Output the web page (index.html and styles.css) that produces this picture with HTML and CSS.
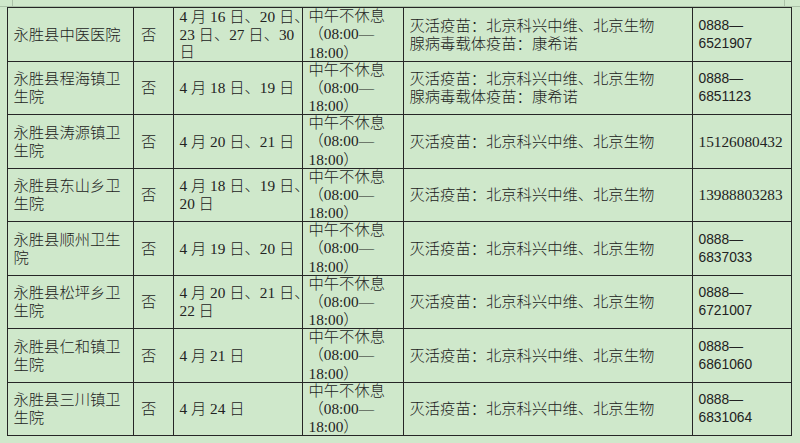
FILE: index.html
```html
<!DOCTYPE html>
<html lang="zh-CN">
<head>
<meta charset="utf-8">
<title>永胜县疫苗接种点</title>
<link rel="stylesheet" href="styles.css">
</head>
<body>
<div class="sheet">
<table class="tbl">
<colgroup>
<col class="c-name"><col class="c-yes"><col class="c-date"><col class="c-time"><col class="c-vac"><col class="c-tel">
</colgroup>
<tbody>
<tr>
<td><div class="in"><p>永胜县中医医院</p></div></td>
<td><div class="in yes"><p>否</p></div></td>
<td><div class="in"><p>4 月 16 日<span class="dun">、</span>20 日<span class="dun">、</span><br>23 日、27 日、30<br>日</p></div></td>
<td><div class="in time"><p>中午不休息<br>（08:00—<br>18:00）</p></div></td>
<td><div class="in"><p>灭活疫苗：北京科兴中维、北京生物<br>腺病毒载体疫苗：康希诺</p></div></td>
<td><div class="in sans"><p>0888—<br>6521907</p></div></td>
</tr>
<tr>
<td><div class="in"><p>永胜县程海镇卫<br>生院</p></div></td>
<td><div class="in yes"><p>否</p></div></td>
<td><div class="in"><p>4 月 18 日、19 日</p></div></td>
<td><div class="in time"><p>中午不休息<br>（08:00—<br>18:00）</p></div></td>
<td><div class="in"><p>灭活疫苗：北京科兴中维、北京生物<br>腺病毒载体疫苗：康希诺</p></div></td>
<td><div class="in sans"><p>0888—<br>6851123</p></div></td>
</tr>
<tr>
<td><div class="in"><p>永胜县涛源镇卫<br>生院</p></div></td>
<td><div class="in yes"><p>否</p></div></td>
<td><div class="in"><p>4 月 20 日、21 日</p></div></td>
<td><div class="in time"><p>中午不休息<br>（08:00—<br>18:00）</p></div></td>
<td><div class="in"><p>灭活疫苗：北京科兴中维、北京生物</p></div></td>
<td><div class="in"><p>15126080432</p></div></td>
</tr>
<tr>
<td><div class="in"><p>永胜县东山乡卫<br>生院</p></div></td>
<td><div class="in yes"><p>否</p></div></td>
<td><div class="in"><p>4 月 18 日<span class="dun">、</span>19 日<span class="dun">、</span><br>20 日</p></div></td>
<td><div class="in time"><p>中午不休息<br>（08:00—<br>18:00）</p></div></td>
<td><div class="in"><p>灭活疫苗：北京科兴中维、北京生物</p></div></td>
<td><div class="in"><p>13988803283</p></div></td>
</tr>
<tr>
<td><div class="in"><p>永胜县顺州卫生<br>院</p></div></td>
<td><div class="in yes"><p>否</p></div></td>
<td><div class="in"><p>4 月 19 日、20 日</p></div></td>
<td><div class="in time"><p>中午不休息<br>（08:00—<br>18:00）</p></div></td>
<td><div class="in"><p>灭活疫苗：北京科兴中维、北京生物</p></div></td>
<td><div class="in sans"><p>0888—<br>6837033</p></div></td>
</tr>
<tr>
<td><div class="in"><p>永胜县松坪乡卫<br>生院</p></div></td>
<td><div class="in yes"><p>否</p></div></td>
<td><div class="in"><p>4 月 20 日<span class="dun">、</span>21 日<span class="dun">、</span><br>22 日</p></div></td>
<td><div class="in time"><p>中午不休息<br>（08:00—<br>18:00）</p></div></td>
<td><div class="in"><p>灭活疫苗：北京科兴中维、北京生物</p></div></td>
<td><div class="in sans"><p>0888—<br>6721007</p></div></td>
</tr>
<tr>
<td><div class="in"><p>永胜县仁和镇卫<br>生院</p></div></td>
<td><div class="in yes"><p>否</p></div></td>
<td><div class="in"><p>4 月 21 日</p></div></td>
<td><div class="in time"><p>中午不休息<br>（08:00—<br>18:00）</p></div></td>
<td><div class="in"><p>灭活疫苗：北京科兴中维、北京生物</p></div></td>
<td><div class="in sans"><p>0888—<br>6861060</p></div></td>
</tr>
<tr>
<td><div class="in"><p>永胜县三川镇卫<br>生院</p></div></td>
<td><div class="in yes"><p>否</p></div></td>
<td><div class="in"><p>4 月 24 日</p></div></td>
<td><div class="in time"><p>中午不休息<br>（08:00—<br>18:00）</p></div></td>
<td><div class="in"><p>灭活疫苗：北京科兴中维、北京生物</p></div></td>
<td><div class="in sans"><p>0888—<br>6831064</p></div></td>
</tr>
</tbody>
</table>
</div>
</body>
</html>
```
FILE: styles.css
```css
html, body {
  margin: 0;
  padding: 0;
}
body {
  width: 800px;
  height: 443px;
  overflow: hidden;
  background-color: #cfe8cb;
  background-image:
    linear-gradient(#abc2a8, #abc2a8),
    linear-gradient(#abc2a8, #abc2a8),
    linear-gradient(#abc2a8, #abc2a8);
  background-size: 800px 1px, 1px 6px, 1px 6px;
  background-position: 0 6px, 12px 0, 784px 0;
  background-repeat: no-repeat;
  font-family: "Liberation Serif", "Noto Sans CJK SC", serif;
  color: #222;
}
.sheet {
  padding: 7px 0 0 7px;
}
.tbl {
  border-collapse: collapse;
  table-layout: fixed;
  width: 784px;
  font-size: 15.3px;
  line-height: 17.7px;
}
.c-name { width: 126px; }
.c-yes { width: 40px; }
.c-date { width: 129px; }
.c-time { width: 101px; }
.c-vac { width: 289px; }
.c-tel { width: 99px; }
.tbl td {
  border: 1px solid #262626;
  padding: 0;
  vertical-align: middle;
}
.in {
  height: 53px;
  padding: 0 1px 0 5.5px;
  display: flex;
  align-items: center;
  white-space: nowrap;
  font-weight: 300;
}
.tbl tr:nth-child(even) .in {
  height: 52px;
}
.in p {
  margin: 0;
}
.yes {
  padding-left: 7px;
}
.dun {
  letter-spacing: -6px;
  margin-right: 6px;
}
.time {
  line-height: 18.3px;
}
.sans {
  font-family: "Liberation Sans", "Noto Sans CJK SC", sans-serif;
  font-size: 13.8px;
  line-height: 17.7px;
}
```
